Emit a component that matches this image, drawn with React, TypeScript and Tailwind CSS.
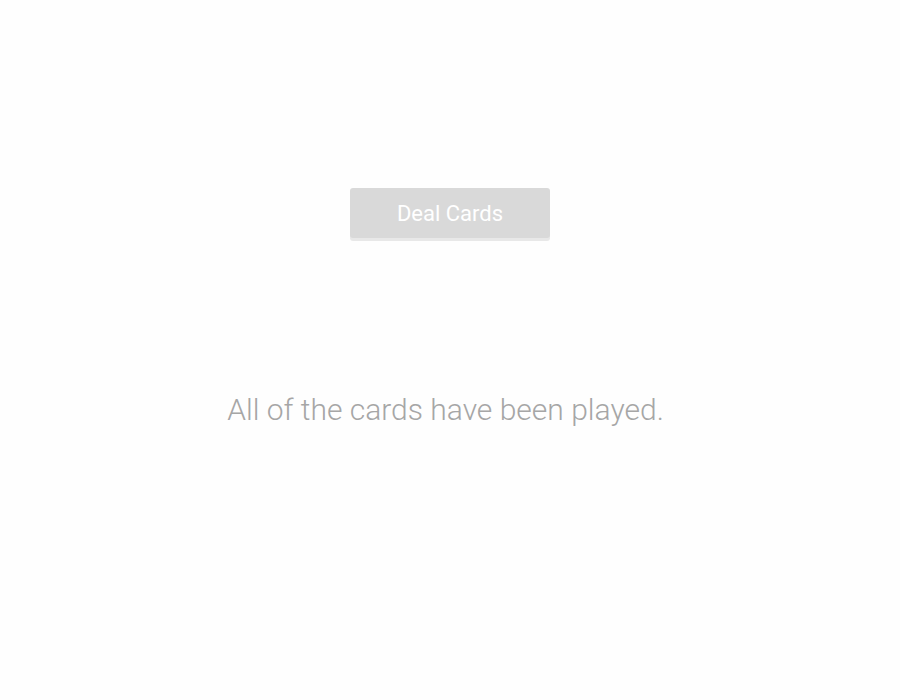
export default function App() {
  return (
    <div className="min-h-[700px] w-full bg-[#fefefe] font-['Roboto',sans-serif] flex flex-col items-center">
      <button className="mt-[188px] w-[200px] h-[50px] rounded-[3px] bg-[#d9d9d9] text-white text-[22px] shadow-[0_3px_0_#e8e8e8]">
        Deal Cards
      </button>
      <p className="mt-[152px] ml-[-9px] text-[30px] font-light text-[#a6a6a6] leading-[40px]">
        All of the cards have been played.
      </p>
    </div>
  );
}
